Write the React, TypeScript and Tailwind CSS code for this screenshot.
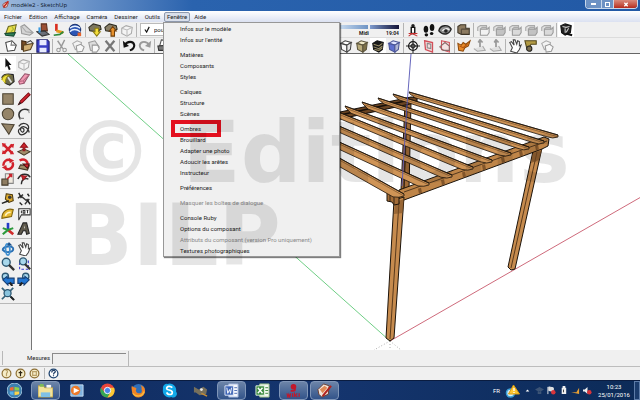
import React from "react";

type Kids = { children?: React.ReactNode };

function Ico({ children }: Kids) {
  return (
    <svg viewBox="0 0 16 16" className="h-[14px] w-[14px] shrink-0" fill="none" stroke="#333" strokeWidth="1.2" aria-hidden="true">
      {children}
    </svg>
  );
}

/* ---------- toolbar drawings ---------- */
const cube = (a: string, b: string, c: string, s: string) => (
  <Ico>
    <path d="M2 5l5-3 7 2-5 3z" fill={a} stroke={s} />
    <path d="M2 5l7 2v8l-6-3z" fill={b} stroke={s} />
    <path d="M9 7l5-3-1 8-4 3z" fill={c} stroke={s} />
  </Ico>
);
const solids = (fill: string) => (
  <Ico>
    <path d="M2 9V5l3-2h7v6l-2 3" fill="#e2e2e2" stroke="#aaa" />
    <path d="M5 7h8l2-2v6l-2 3H5z" fill={fill} stroke="#999" />
    <path d="M5 7l2-2h6" stroke="#aaa" />
  </Ico>
);
const sheet = (
  <Ico>
    <path d="M2 4l7-2 5 5-2 6-8 1z" fill="#fff" stroke="#444" />
    <path d="M9 2l-1 5 6 0" stroke="#777" />
  </Ico>
);
const greyBox = (
  <Ico>
    <path d="M2 6l5-3 7 2-1 7-5 3-6-3z" fill="#f4f4f4" stroke="#aaa" />
    <path d="M2 6l6 2 6-3M8 8v6" stroke="#bbb" />
  </Ico>
);

const I: Record<string, React.ReactNode> = {
  map: (
    <Ico>
      <path d="M2 12l3-8 9-2-2 9z" fill="#e9dc4a" stroke="#6a6a20" />
      <path d="M1 12l12-1-2 4-9-1z" fill="#2f7f55" stroke="#174a34" />
      <path d="M9 4l2 3-3 3" stroke="#a8b83a" strokeWidth="1.500" />
    </Ico>
  ),
  terrain: (
    <Ico>
      <path d="M1 4l4-2 10 9-4 3-9-2z" fill="#d4d4d4" stroke="#999" />
      <path d="M2 4l5 6 7 1" stroke="#aaa" />
    </Ico>
  ),
  building: (
    <Ico>
      <path d="M6 1h6l1 8H6z" fill="#9b4f35" stroke="#5b2e1e" />
      <path d="M1 10l9-1 5 4-8 2z" fill="#6b6f78" stroke="#333" />
      <path d="M4 5v6" stroke="#3d9be0" strokeWidth="2.4" />
    </Ico>
  ),
  axesMan: (
    <Ico>
      <path d="M5 1v8" stroke="#d92d1f" strokeWidth="3" />
      <path d="M5 9l8 2" stroke="#e59a1f" strokeWidth="3.500" />
      <path d="M2 14l7-1 4-3" stroke="#2f8a3b" strokeWidth="2" />
    </Ico>
  ),
  earth: (
    <Ico>
      <circle cx="8" cy="8" r="6.500" fill="#2b55b5" stroke="#1a3270" />
      <path d="M2 6c4-3 8-3 12 0M2 10c4-4 8-3 12 0" stroke="#e8f1ff" strokeWidth="1.600" />
      <path d="M11 11h4v4h-4z" fill="#e4622a" stroke="none" />
    </Ico>
  ),
  getModels: (
    <Ico>
      <path d="M1 5l5-4 8 2 1 4-5 3-8-1z" fill="#7d7760" stroke="#2d2b20" />
      <path d="M8 6h4v4h2l-4 5-4-5h2z" fill="#f5df3a" stroke="#8c7b14" />
    </Ico>
  ),
  shareModel: (
    <Ico>
      <path d="M1 5l5-4 8 2 1 4-5 3-8-1z" fill="#8a8069" stroke="#2d2b20" />
      <path d="M8 15V9H6l4-5 4 5h-2v6z" fill="#e8912c" stroke="#6e3f0d" />
    </Ico>
  ),
  greyBox,
  sheet,
  open: (
    <Ico>
      <path d="M2 2l5 1v10l-5-1z" fill="#7a4f28" stroke="#3a2410" />
      <path d="M4 7l11-2-3 7-8 2z" fill="#cfae74" stroke="#5b4422" />
      <path d="M8 4l4-2 3 3" stroke="#444" />
    </Ico>
  ),
  save: (
    <Ico>
      <path d="M1 1h12l2 2v12H1z" fill="#3a3fc4" stroke="#20226e" />
      <path d="M4 1h8v6H4zM4 10h8v5H4z" fill="#e8ecff" stroke="none" />
    </Ico>
  ),
  cut: (
    <Ico>
      <path d="M3 2l6 9M11 1L6 11" stroke="#999" strokeWidth="1.600" />
      <circle cx="4" cy="12.500" r="2" stroke="#999" />
      <circle cx="11" cy="12.500" r="2" stroke="#999" />
    </Ico>
  ),
  copy: (
    <Ico>
      <path d="M2 5l5-3 5 2-1 6-6 2z" fill="#f3f3f3" stroke="#aaa" />
      <path d="M6 8l5-2 4 3-2 5-6 1z" fill="#f8f8f8" stroke="#999" />
    </Ico>
  ),
  paste: (
    <Ico>
      <path d="M2 4l7-2 5 7-4 5-6-1z" fill="#ddd" stroke="#999" />
      <path d="M6 7h6l2 4-3 4H6z" fill="#fafafa" stroke="#999" />
    </Ico>
  ),
  del: (
    <Ico>
      <path d="M3 2l10 12M13 2L3 14" stroke="#777" strokeWidth="2.600" />
    </Ico>
  ),
  undo: (
    <Ico>
      <path d="M3 7c3-5 10-5 11 0 0 3-2 5-5 6" stroke="#111" strokeWidth="2.400" />
      <path d="M1 2l1 8 6-2z" fill="#111" stroke="none" />
    </Ico>
  ),
  redo: (
    <Ico>
      <path d="M13 7C10 2 3 2 2 7c0 3 2 5 5 6" stroke="#999" strokeWidth="2.200" />
      <path d="M15 2l-1 8-6-2z" fill="#999" stroke="none" />
    </Ico>
  ),
  print: (
    <Ico>
      <path d="M5 1l7 1-1 6H3z" fill="#fff" stroke="#555" />
      <path d="M1 8l13-1v6H2z" fill="#777" stroke="#333" />
    </Ico>
  ),
  figure: (
    <Ico>
      <circle cx="8" cy="3" r="2" fill="#222" stroke="none" />
      <path d="M6 5h4v7H6z" fill="#fff" stroke="#111" strokeWidth="1.600" />
      <path d="M3 15l4-3 6 3M3 12l10 0" stroke="#c53030" />
    </Ico>
  ),
  feet: (
    <Ico>
      <ellipse cx="4.500" cy="7" rx="2.600" ry="4" fill="#111" stroke="none" />
      <ellipse cx="11.500" cy="5" rx="2.600" ry="4" fill="#111" stroke="none" />
      <ellipse cx="5" cy="13.500" rx="2" ry="1.800" fill="#111" stroke="none" />
      <ellipse cx="11" cy="12" rx="2" ry="1.800" fill="#111" stroke="none" />
    </Ico>
  ),
  eye: (
    <Ico>
      <path d="M1 9c1-7 11-8 14-2-2 6-9 8-14 2z" fill="#8d8d8d" stroke="#222" strokeWidth="1.600" />
      <path d="M5 9c2-3 6-3 8-1" stroke="#eee" strokeWidth="1.500" />
      <circle cx="9" cy="9" r="2" fill="#222" stroke="none" />
    </Ico>
  ),
  outer: (
    <Ico>
      <path d="M1 4l3-2h6v4h4v7H5l-4-2z" fill="#8c7a60" stroke="#3c3426" />
      <path d="M5 7h9M5 7v6" stroke="#53483a" />
    </Ico>
  ),
  solidA: solids("#f2f2f2"),
  solidB: solids("#c2c2c2"),
  solidC: solids("#dadada"),
  texBox: (
    <Ico>
      <path d="M2 3l5-2 7 2-1 8-6 3-4-3z" fill="#222" stroke="#111" />
      <path d="M4 4l4 1 4-1M7 6l0 5M11 6l-3 5" stroke="#ccc" strokeWidth="1.200" />
      <path d="M8 12l7 2" stroke="#111" strokeWidth="2.400" />
    </Ico>
  ),
  cubeW: cube("#fff", "#fafafa", "#e6e6e6", "#444"),
  cubeT: cube("#efe9c8", "#b9ac7c", "#7c7048", "#5c553d"),
  cubeK: (
    <Ico>
      <path d="M2 5l5-3 7 2-1 8-4 3-6-3z" fill="#1a1a1a" stroke="#111" />
      <path d="M3 6l6 2 4-3M3 9l6 2 4-3M4 12l5 1 4-3" stroke="#9c9068" />
    </Ico>
  ),
  cubeB: cube("#dfe4ff", "#5f70d0", "#b0b6d4", "#4a5596"),
  section: (
    <Ico>
      <circle cx="8" cy="8" r="5" stroke="#111" strokeWidth="1.500" />
      <path d="M8 0v16M0 8h16M5 8l3-3 3 3-3 3z" stroke="#222" />
    </Ico>
  ),
  plane: (
    <Ico>
      <path d="M3 2l9 2v11l-8-3z" fill="#f3dcdc" stroke="#d2505a" strokeWidth="1.500" />
      <path d="M6 5l4 1v5l-4-1z" stroke="#888" />
    </Ico>
  ),
  planeCut: (
    <Ico>
      <path d="M4 2l9 2v11l-9-3z" fill="#f4e3e3" stroke="#d2505a" />
      <path d="M2 9l6-5 5 4v5H6z" stroke="#8a6a6a" />
    </Ico>
  ),
  sandbox: (
    <Ico>
      <path d="M1 5l4 2 2-3 3 2 5-4-2 6-4 2-2 4-5-1z" fill="#e78a2a" stroke="#8e4a0c" />
      <path d="M3 8l4 2 5-4" stroke="#b3540f" />
    </Ico>
  ),
  stamp: (
    <Ico>
      <path d="M1 11l4 3 9-1-3-5" fill="#e0e0e0" stroke="#aaa" />
      <path d="M8 1v8M6 4l2-3 3 3" stroke="#999" strokeWidth="2" />
    </Ico>
  ),
  hand: (
    <Ico>
      <path d="M3 14l2-4-3-6 2-1 3 4-1-6 2 0 2 5 1-4 2 1 0 5 2-1-2 5-3 4z" fill="#fff" stroke="#444" />
    </Ico>
  ),
  tape2: (
    <Ico>
      <path d="M1 2h13v4H8L6 10H3z" fill="#b29a43" stroke="#54481c" />
      <circle cx="6" cy="11" r="3" fill="#7d7050" stroke="#222" />
    </Ico>
  ),

  /* large tool set */
  select: (
    <Ico>
      <path d="M5 1l7 8-3 0 2 5-2 1-2-5-2 2z" fill="#111" stroke="none" />
    </Ico>
  ),
  eraser: (
    <Ico>
      <path d="M2 11l7-9 5 1-6 10-5 1z" fill="#f39ab4" stroke="#94546a" />
      <path d="M2 11l5-1 7-7M7 10l1 3" stroke="#ba6a84" />
    </Ico>
  ),
  paint: (
    <Ico>
      <path d="M1 6c2-4 8-4 13-3l1 8-5 4-5-2z" fill="#6d6a49" stroke="#222" />
      <path d="M1 9c0-4 5-7 9-5-4 1-5 4-5 9" fill="#efe13c" stroke="#928614" />
      <path d="M8 6l4 6" stroke="#ddd" strokeWidth="2" />
    </Ico>
  ),
  rect: (
    <Ico>
      <path d="M2 2h12v12H2z" fill="#958468" stroke="#4b4232" />
    </Ico>
  ),
  pencil: (
    <Ico>
      <path d="M2 14l2-4 9-9 2 2-9 9z" fill="#d62330" stroke="#7c1018" />
      <path d="M1 15l4-2-2-2z" fill="#222" stroke="none" />
    </Ico>
  ),
  circle: (
    <Ico>
      <circle cx="8" cy="8" r="6.500" fill="#958468" stroke="#4b4232" />
    </Ico>
  ),
  arc: (
    <Ico>
      <path d="M4 14C-1 6 6 0 14 4" stroke="#333" strokeWidth="1.800" />
      <path d="M3 13l5 0M13 3l1 4" stroke="#888" />
    </Ico>
  ),
  poly: (
    <Ico>
      <path d="M1 2l14 1-6 11z" fill="#958468" stroke="#4b4232" />
    </Ico>
  ),
  free: (
    <Ico>
      <path d="M2 5c4-6 13-3 11 3s-9 9-11 4 6-7 6-3-4 3-4-1 8-4 10 4" stroke="#333" strokeWidth="1.400" />
    </Ico>
  ),
  move: (
    <Ico>
      <path d="M3 3l10 10M13 3L3 13" stroke="#d2232c" strokeWidth="3" />
      <path d="M1 1l5 1-4 4zM15 2l-1 5-4-4zM15 14l-5 0 3-4zM1 14l1-5 4 4z" fill="#d2232c" stroke="none" />
    </Ico>
  ),
  push: (
    <Ico>
      <path d="M1 11l7-3 7 3-7 4z" fill="#a18d6a" stroke="#453a28" />
      <path d="M7 10V6H4l4-5 4 5H9v4z" fill="#d2232c" stroke="#8d1219" />
    </Ico>
  ),
  rotate: (
    <Ico>
      <path d="M3 10a5.500 5.500 0 0 1 8-6M13 6a5.500 5.500 0 0 1-8 7" stroke="#d2232c" strokeWidth="2.800" />
      <path d="M9 1l6 3-5 3zM7 15l-6-3 5-3z" fill="#d2232c" stroke="none" />
    </Ico>
  ),
  follow: (
    <Ico>
      <path d="M2 13l2-4 10 1-2 5z" fill="#9f8b68" stroke="#453a28" />
      <path d="M3 4c5-3 10 0 9 6" stroke="#d2232c" strokeWidth="2.800" />
      <path d="M7 8l7 0-2 5z" fill="#d2232c" stroke="#4c1010" />
    </Ico>
  ),
  scale: (
    <Ico>
      <path d="M5 2h9v11H5z" fill="#efe9df" stroke="#888" />
      <path d="M1 8h7v7H1z" fill="#8f7d62" stroke="#453a28" />
      <path d="M7 8l5-5M9 3h3v3" stroke="#c9232c" strokeWidth="1.800" />
    </Ico>
  ),
  offset: (
    <Ico>
      <path d="M1 8c4-8 12-6 14-2" stroke="#2b2b2b" strokeWidth="1.800" />
      <path d="M5 14c0-6 4-7 8-6" stroke="#2b2b2b" strokeWidth="1.500" />
      <path d="M5 4l6 1-4 4z" fill="#d2232c" stroke="#9a1a20" />
    </Ico>
  ),
  tape: (
    <Ico>
      <path d="M6 2l7 1 1 7-5 2-4-4z" fill="#d9a72d" stroke="#4d3a0c" />
      <circle cx="10" cy="6" r="2" fill="#3a3a3a" stroke="none" />
      <path d="M1 13l8-3" stroke="#222" strokeWidth="1.800" />
    </Ico>
  ),
  dims: (
    <Ico>
      <path d="M5 5l6 5M1 7l6-4M9 14l5-6" stroke="#333" strokeWidth="1.500" />
      <path d="M2 1l3 6M11 8l4 6M3 12l3 3M12 2l2 3" stroke="#222" strokeWidth="1.600" />
    </Ico>
  ),
  protractor: (
    <Ico>
      <path d="M1 13C1 5 7 1 14 3l-2 8z" fill="#e6b932" stroke="#7f620e" />
      <path d="M5 10c1-3 3-4 6-4" stroke="#fff6c8" strokeWidth="1.800" />
    </Ico>
  ),
  label: (
    <Ico>
      <path d="M2 2h13v7H5l-3 6z" fill="#fff" stroke="#333" />
      <path d="M5 4v3M7 4v3h2V4zM11 4h2M12 4v3" stroke="#333" />
    </Ico>
  ),
  axes: (
    <Ico>
      <path d="M8 9V1" stroke="#253ac8" strokeWidth="3" />
      <path d="M8 9l6 5" stroke="#cf2b2b" strokeWidth="3" />
      <path d="M8 9l-6 5M2 7l6 2 6-2" stroke="#2d9a3c" strokeWidth="2.400" />
    </Ico>
  ),
  text3d: (
    <Ico>
      <path d="M1 14L7 1h4l3 12-3 1-1-4H7l-2 4z" fill="#5f5a4c" stroke="#222" />
      <path d="M8 7l1-3 0 3z" fill="#eee" stroke="none" />
    </Ico>
  ),
  orbit: (
    <Ico>
      <path d="M2 9c0-4 12-6 12-1 0 4-9 5-12 1z" stroke="#2a6fb3" strokeWidth="2.200" />
      <path d="M7 2c4 0 4 12 1 13-3 0-4-12-1-13z" stroke="#3f8fd0" strokeWidth="2" />
      <path d="M9 0l4 4-6 0z" fill="#1d5088" stroke="none" />
    </Ico>
  ),
  zoomIn: (
    <Ico>
      <circle cx="6" cy="6" r="4.500" fill="#a9d8ec" stroke="#2d5873" strokeWidth="1.600" />
      <path d="M9 9l6 6" stroke="#333" strokeWidth="2.600" />
    </Ico>
  ),
  zoomWin: (
    <Ico>
      <path d="M3 6v8h10V3" stroke="#3a3ad0" strokeDasharray="3 2" />
      <circle cx="7" cy="5" r="4" fill="#a9d8ec" stroke="#2d5873" strokeWidth="1.600" />
      <path d="M9 8l6 6" stroke="#333" strokeWidth="2.600" />
    </Ico>
  ),
  prev: (
    <Ico>
      <circle cx="5" cy="5" r="3.600" fill="#a9d8ec" stroke="#2d5873" strokeWidth="1.500" />
      <path d="M2 9l5-4v2h8v6H8v2z" fill="#2377d2" stroke="#123c74" />
      <path d="M10 12l3 4" stroke="#222" strokeWidth="2.400" />
    </Ico>
  ),
  next: (
    <Ico>
      <circle cx="10" cy="5" r="3.600" fill="#a9d8ec" stroke="#2d5873" strokeWidth="1.500" />
      <path d="M14 9L9 5v2H1v6h7v2z" fill="#2377d2" stroke="#123c74" />
      <path d="M3 16l3-4" stroke="#222" strokeWidth="2.400" />
    </Ico>
  ),
  extents: (
    <Ico>
      <path d="M1 1l13 13M14 1L1 14" stroke="#37647c" strokeWidth="2" />
      <circle cx="7.500" cy="7" r="4" fill="#8ac4de" stroke="#2d5873" strokeWidth="1.500" />
      <path d="M11 11l4 4" stroke="#222" strokeWidth="2.400" />
    </Ico>
  ),
};

function Tool({ name, on }: { name: string; on?: boolean }) {
  return (
    <button
      type="button"
      aria-label={name}
      className={"flex h-[15px] w-4 shrink-0 items-center justify-center " + (on ? "bg-white" : "")}
    >
      {I[name]}
    </button>
  );
}

function Sep() {
  return <span className="mx-px h-[14px] w-px shrink-0 bg-[#b4b4b4]" />;
}

function Group({ names, on }: { names: string[]; on?: string }) {
  return (
    <div className="flex shrink-0">
      {names.map((n, i) => (
        <Tool key={i} name={n} on={n === on} />
      ))}
    </div>
  );
}

/* ---------- menu ---------- */
const menus = ["Fichier", "Édition", "Affichage", "Caméra", "Dessiner", "Outils"];
const menuGroups = [
  ["Infos sur le modèle", "Infos sur l'entité"],
  ["Matières", "Composants", "Styles"],
  ["Calques", "Structure", "Scènes"],
  ["Ombres", "Brouillard", "Adapter une photo", "Adoucir les arêtes", "Instructeur"],
  ["Préférences"],
  ["Masquer les boîtes de dialogue"],
  ["Console Ruby", "Options du composant", "Attributs du composant (version Pro uniquement)", "Textures photographiques"],
];
const disabled = ["Masquer les boîtes de dialogue", "Attributs du composant (version Pro uniquement)"];

function WindowMenu() {
  return (
    <div className="absolute -left-px top-[10px] z-20 flex w-[177px] flex-col gap-1 border border-[#979797] bg-[#f0f0f0] shadow-[1px_1px_1px_rgba(0,0,0,0.5)]">
      {menuGroups.map((g, i) => (
        <div key={i} className="flex flex-col">
          {g.map((t) => (
            <button
              key={t}
              type="button"
              disabled={disabled.includes(t)}
              className="relative h-[11px] whitespace-nowrap pl-4 text-left leading-[11px] text-[#1c1c1c] disabled:text-[#8b8b8b]"
            >
              {t}
              {t === "Ombres" && <span className="absolute -top-[3px] left-[7px] z-10 h-[17px] w-[50px] border-4 border-[#e3101f]" />}
            </button>
          ))}
        </div>
      ))}
    </div>
  );
}

/* ---------- pergola ---------- */
/* start x, start y, tip x, tip y, thickness; ordered from the far rafter to the near one */
const rafters = [
  [408, 92, 557, 138, 5],
  [392, 94, 543, 144, 5],
  [377, 98, 528, 150, 5],
  [361, 102, 510, 156, 6],
  [344, 106, 491, 163, 6],
  [325, 107, 472, 170, 7],
  [308, 113, 451, 178, 7],
  [290, 120, 428, 186, 8],
  [270, 120, 403, 197, 9],
];

function Rafter({ r }: { r: number[] }) {
  const [x1, y1, x2, yt, t] = r;
  const y2 = yt - 3;
  const m = (y2 - y1) / (x2 - x1);
  return (
    <g>
      <path
        d={`M${x1} ${y1}L${x2} ${y2}L${x2} ${y2 + 2}Q${x2 - 5} ${y2 + 4} ${x2 - 11} ${y2 - 11 * m + t}L${x1 + 6} ${y1 + 6 * m + t - 1}L${x1 + 1} ${y1 + 2}Z`}
        fill="#cf9456"
        stroke="#1d140b"
        strokeWidth="0.8"
      />
      <path d={`M${x1 + 3} ${y1 + 3 * m + 2}L${x2 - 1} ${y2 + 1.5}`} stroke="#5a3a1c" strokeWidth="0.5" />
      <path d={`M${x1} ${y1}L${x2} ${y2}`} stroke="#1d140b" strokeWidth="0.8" />
    </g>
  );
}

function Scene() {
  return (
    <svg viewBox="31 54 609 296" preserveAspectRatio="xMinYMin slice" className="h-full w-full" fill="none" aria-label="Pergola">
      <path d="M67 54L389 341" stroke="#5fc877" strokeWidth="0.9" />
      <path d="M389 341L640 197" stroke="#c8596c" strokeWidth="0.9" />
      <path d="M389 341L373 350M389 341V350M389 341L400 350" stroke="#999" strokeWidth="0.8" strokeDasharray="1 2" />
      {/* back post and back beam */}
      <path d="M404 103L410 102L408 189L400 190Z" fill="#a06a36" stroke="#1d140b" />
      <path d="M406 104L403 189" stroke="#3a2715" strokeWidth="1.5" />
      <path d="M325 115L410 97L416 98V102L409 104L325 122Z" fill="#6a4422" stroke="#17100a" strokeWidth="1.2" />
      <path d="M325 118L409 100" stroke="#17100a" strokeWidth="1.5" />
      {/* right post */}
      <path d="M532 151L541 148L514 269L510 270L507 267Z" fill="#c68b4e" stroke="#1d140b" />
      <path d="M536 152L510 268" stroke="#5a3a1c" />
      <path d="M532 153L541 150L538 160L530 163Z" fill="#7c5026" opacity="0.7" />
      {/* front beam */}
      <path d="M398 190L543 137L548 139L547 146L541 149L403 200L398 203Z" fill="#bf8548" stroke="#1d140b" />
      <path d="M403 192L546 141" stroke="#3a2715" strokeWidth="0.8" />
      {[417, 440, 461, 481, 500, 518, 534].map((x) => (
        <path key={x} d={`M${x} ${194 - (x - 403) * 0.37}l3 -1 1 5 -3 1z`} fill="#6d4520" opacity="0.75" />
      ))}
      {/* near post */}
      <path d="M393 200L403 197L393 338L389 341L385 338Z" fill="#c68b4e" stroke="#1d140b" />
      <path d="M398 202L389 339" stroke="#5a3a1c" />
      <path d="M394 202L403 199L402 213L393 214Z" fill="#7c5026" opacity="0.6" />
      <path d="M386 192L392 194L398 197V204L393 205L391 202L386 201Z" fill="#a36c37" stroke="#1d140b" />
      <path d="M389 194V202M393 196V204" stroke="#1d140b" strokeWidth="0.8" />
      {rafters.map((r, i) => (
        <Rafter key={i} r={r} />
      ))}
      <path d="M410 54L406 105L401 186" stroke="#5656b4" strokeWidth="0.9" />
    </svg>
  );
}

/* ---------- taskbar ---------- */
function TaskIcon({ children, on, label }: Kids & { on?: boolean; label: string }) {
  return (
    <button
      type="button"
      aria-label={label}
      className={
        "flex h-[19px] w-[29px] shrink-0 items-center justify-center rounded-sm border " +
        (on ? "border-[#8096b8] bg-linear-to-b from-[#6c84a8] to-[#33548a]" : "border-transparent")
      }
    >
      <svg viewBox="0 0 16 16" className="h-[15px] w-[15px]" fill="none" aria-hidden="true">
        {children}
      </svg>
    </button>
  );
}

function Tray({ children }: Kids) {
  return (
    <svg viewBox="0 0 10 10" className="h-[9px] w-[9px] shrink-0" fill="none" aria-hidden="true">
      {children}
    </svg>
  );
}

export default function App() {
  return (
    <div className="relative flex h-screen w-full flex-col overflow-hidden bg-[#f0f0f0] font-[Roboto,'Noto_Sans',sans-serif] text-[6px] leading-[10px] text-[#1c1c1c]">
      {/* title bar */}
      <header className="flex h-[11px] shrink-0 items-start bg-linear-to-r from-[#9db9dc] via-[#2a63ae] via-30% to-[#2259a5] pl-[2px]">
        <svg viewBox="0 0 10 10" className="mr-px h-[9px] w-[8px]" aria-hidden="true">
          <path d="M1 5l4-3 3 1-2 5-4 1z" fill="#f4e8e0" stroke="#943025" />
          <path d="M2 8l6-7" stroke="#c3271b" strokeWidth="2" />
        </svg>
        <h1 className="flex-1 font-['Open_Sans',sans-serif] text-[6px] leading-[11px] text-[#0c1526]">modèle2 - SketchUp</h1>
        <div className="mr-[2px] flex h-[9px] overflow-hidden rounded-b-sm border border-t-0 border-[#c8d7ea]">
          <button type="button" aria-label="Réduire" className="flex w-[15px] items-center justify-center bg-[#6d92c4]">
            <span className="h-[2px] w-[5px] bg-white" />
          </button>
          <button type="button" aria-label="Restaurer" className="flex w-[13px] items-center justify-center border-x border-[#c8d7ea] bg-[#6d92c4]">
            <span className="h-[5px] w-[5px] border border-white" />
          </button>
          <button type="button" aria-label="Fermer" className="flex w-[23px] items-center justify-center bg-linear-to-b from-[#d98a7c] to-[#b5281a]">
            <svg viewBox="0 0 6 6" className="h-[5px] w-[6px]" stroke="#fff" strokeWidth="1.6" aria-hidden="true">
              <path d="M1 1l4 4M5 1L1 5" />
            </svg>
          </button>
        </div>
      </header>

      {/* menu bar */}
      <nav className="flex h-[11px] shrink-0 items-center gap-px bg-linear-to-b from-white to-[#dbe1f1] pl-px">
        {menus.map((m) => (
          <button key={m} type="button" className="h-[10px] px-[3px] leading-[10px]">
            {m}
          </button>
        ))}
        <div className="relative">
          <button type="button" className="h-[10px] rounded-[2px] border border-[#8e99ad] bg-[#d9dfeb] px-[2px] leading-[8px]">
            Fenêtre
          </button>
          <WindowMenu />
        </div>
        <button type="button" className="h-[10px] px-[3px] leading-[10px]">
          Aide
        </button>
      </nav>

      {/* toolbars */}
      <div className="flex h-4 shrink-0 items-center border-b border-[#dcdcdc] pl-[3px]">
        <Group names={["map", "terrain", "building", "axesMan", "earth"]} />
        <span className="w-px" />
        <Sep />
        <Group names={["getModels", "shareModel", "greyBox"]} />
        <Sep />
        <div className="ml-[2px] flex h-[13px] w-[199px] shrink-0 items-center border border-[#bbb] bg-white pl-[3px]">
          <svg viewBox="0 0 8 8" className="h-[7px] w-[7px] shrink-0" fill="none" aria-hidden="true">
            <path d="M1 4l2 3 3-6" stroke="#111" strokeWidth="1.3" />
          </svg>
          <select aria-label="Calque" className="ml-[3px] flex-1 appearance-none">
            <option>pour pergola</option>
          </select>
        </div>
        <div className="flex w-[63px] shrink-0 flex-col gap-px pt-[2px] pr-[3px] text-[5px] leading-[6px] font-bold">
          <div className="flex gap-[2px]">
            <span className="h-[4px] flex-1 bg-linear-to-r from-[#c9dcf0] to-[#6f94c4]" />
            <span className="h-[4px] flex-1 bg-linear-to-r from-[#7f9cd0] to-[#141438]" />
          </div>
          <div className="flex justify-between pl-[20px]">
            <span>Midi</span>
            <span>19:04</span>
          </div>
        </div>
        <Sep />
        <Group names={["figure", "feet", "eye"]} />
        <Sep />
        <Group names={["outer"]} />
        <Sep />
        <Group names={["solidA", "solidB", "solidC", "solidB", "solidC"]} />
        <Sep />
        <Tool name="texBox" on />
      </div>
      <div className="flex h-[15px] shrink-0 items-center pl-[3px]">
        <Group names={["sheet", "open", "save"]} />
        <Sep />
        <Group names={["cut", "copy", "paste", "del"]} />
        <Sep />
        <Group names={["undo", "redo"]} />
        <Sep />
        <Tool name="print" />
        <span className="w-[166px] shrink-0" />
        <Group names={["cubeW", "cubeT", "cubeK", "cubeB"]} on="cubeK" />
        <Sep />
        <Group names={["section", "plane", "planeCut"]} />
        <Sep />
        <Group names={["sandbox", "stamp", "stamp"]} />
        <Sep />
        <Group names={["hand", "tape2", "copy"]} />
      </div>

      {/* tool column and drawing area */}
      <div className="flex min-h-0 flex-1 border-t border-[#666]">
        <aside className="flex w-8 shrink-0 flex-col gap-[2px] border-r border-[#777] pt-[2px]">
          {[
            ["select", "greyBox", "paint", "eraser"],
            ["rect", "pencil", "circle", "arc", "poly", "free"],
            ["move", "push", "rotate", "follow", "scale", "offset"],
            ["tape", "dims", "protractor", "label", "axes", "text3d"],
            ["orbit", "hand", "zoomIn", "zoomWin", "prev", "next", "extents"],
          ].map((g, i) => (
            <div key={i} className="grid grid-cols-[16px_15px] border-b border-[#b8b8b8] pb-[2px]">
              {g.map((n) => (
                <Tool key={n} name={n} on={n === "select"} />
              ))}
            </div>
          ))}
        </aside>
        <main className="min-w-0 flex-1 bg-white">
          <Scene />
        </main>
      </div>

      {/* measurements */}
      <div className="flex h-[17px] shrink-0 items-center border-b border-[#bdbdbd] pl-[2px]">
        <span className="h-[14px] w-px bg-[#b8b8b8]" />
        <label htmlFor="mesures" className="pl-6 pr-[2px]">
          Mesures
        </label>
        <input id="mesures" className="h-[11px] w-[74px] border-l border-t border-[#8a8a8a] bg-[#efefef] px-1" />
        <span className="ml-[2px] h-[15px] w-px bg-[#b8b8b8]" />
      </div>
      <div className="flex h-[13px] shrink-0 items-center gap-[3px] pl-px">
        {["M5 3c2-1 3 1 1 3v3", "M6 3v6M4 5h4", "M4 4h4v4H4z"].map((d) => (
          <svg key={d} viewBox="0 0 12 12" className="h-[11px] w-[11px]" fill="none" aria-hidden="true">
            <circle cx="6" cy="6" r="4.800" fill="#f6edc9" stroke="#8d6f33" strokeWidth="1.300" />
            <path d={d} stroke={d === "M6 3v6M4 5h4" ? "#2b2212" : "#b9a068"} strokeWidth="1.300" />
          </svg>
        ))}
        <span className="ml-px h-[11px] w-px bg-[#b8b8b8]" />
        <svg viewBox="0 0 12 12" className="h-[11px] w-[11px]" fill="none" aria-hidden="true">
          <circle cx="6" cy="6" r="4.800" fill="#fff" stroke="#1f4470" strokeWidth="1.400" />
          <path d="M4 5c0-3 4-3 4-1 0 1-2 1-2 3M6 8v1" stroke="#1f3c64" strokeWidth="1.300" />
        </svg>
      </div>

      {/* taskbar */}
      <footer className="flex h-5 shrink-0 items-center gap-[2px] border-t border-[#0a1c40] bg-linear-to-r from-[#102c5e] via-[#15356f] to-[#0c2b58]">
        <TaskIcon label="Démarrer">
          <circle cx="8" cy="8" r="8" fill="#3d7fb0" stroke="#a9cbe0" />
          <path d="M3 5l4-1v4H3z" fill="#ee6a35" />
          <path d="M8 4l5 1v3H8z" fill="#8fcf4a" />
          <path d="M3 9h4v4l-4-1z" fill="#57b2ec" />
          <path d="M8 9h5v3l-5 1z" fill="#fbd34b" />
        </TaskIcon>
        <TaskIcon label="Explorateur" on>
          <path d="M0 3h6l1 2h9v10H0z" fill="#f3e39a" stroke="#b49a43" />
          <path d="M2 1h4v3H2z" fill="#7cba58" />
          <path d="M9 2h5v3H9z" fill="#f5f5f5" />
          <path d="M3 10h10v5H3z" fill="#7fc1e6" />
        </TaskIcon>
        <TaskIcon label="Lecteur multimédia">
          <path d="M2 2h13v12H2z" fill="#7fb2df" stroke="#c9e0f4" />
          <circle cx="7" cy="8" r="5" fill="#ed7a2a" />
          <path d="M5 5l6 3-6 3z" fill="#fff" />
        </TaskIcon>
        <TaskIcon label="Chrome">
          <circle cx="8" cy="8" r="7.500" fill="#e9453a" />
          <path d="M1 5a7.500 7.500 0 0 0 7 10.500L11 10H5z" fill="#35a854" />
          <path d="M8 15.500A7.500 7.500 0 0 0 15 5H9l2 5z" fill="#fbc934" />
          <circle cx="8" cy="8" r="3.400" fill="#4a86ea" stroke="#fff" />
        </TaskIcon>
        <TaskIcon label="Firefox">
          <circle cx="8" cy="8" r="7" fill="#2f6fb8" />
          <path d="M1 3c1 2 3 1 5 3-2 2 0 5 3 5 3 0 3-3 2-5 1 0 0-3-1-4 3 1 5 3 5 6a7 7 0 0 1-14 1c0-2-1-4 0-6z" fill="#f08325" />
          <path d="M2 11c3 4 10 4 12-2" stroke="#f9ba3a" strokeWidth="1.500" />
        </TaskIcon>
        <TaskIcon label="Skype">
          <path d="M1 5a4 4 0 0 1 5-4 7 7 0 0 1 9 8 4 4 0 0 1-5 6 7 7 0 0 1-9-8z" fill="#12a9ea" />
          <path d="M11 5C9 3 5 3 5 6c0 2 6 1 6 4 0 3-5 3-6 0" stroke="#fff" strokeWidth="1.800" />
        </TaskIcon>
        <TaskIcon label="GIMP">
          <path d="M1 4l5 3 5-3 4 3-1 5-7 1-4-3-2 0z" fill="#77705c" />
          <circle cx="9" cy="7" r="1.500" fill="#eee" />
          <path d="M9 11l6 3" stroke="#c78d36" strokeWidth="1.500" />
        </TaskIcon>
        <TaskIcon label="Word" on>
          <path d="M5 1h10v14H5z" fill="#f4f7fd" stroke="#9cb0d8" />
          <path d="M1 3h9v10H1z" fill="#3a62b4" stroke="#e1e9f8" />
          <path d="M3 5l1 6 2-4 1 4 1-6" stroke="#fff" />
          <path d="M11 5h3M11 8h3M11 11h3" stroke="#4a6bb0" />
        </TaskIcon>
        <TaskIcon label="Excel">
          <path d="M5 1h10v14H5z" fill="#f2f8ef" stroke="#98bd87" />
          <path d="M1 3h9v10H1z" fill="#3b8a3e" stroke="#e1f3e0" />
          <path d="M3 5l5 6M8 5l-5 6" stroke="#fff" strokeWidth="1.500" />
          <path d="M11 5h3M11 8h3M11 11h3" stroke="#3b8a3e" />
        </TaskIcon>
        <TaskIcon label="wiki" on>
          <circle cx="8" cy="4" r="3" fill="#c2182b" />
          <path d="M9 6c2 2-2 3-4 2" stroke="#c2182b" strokeWidth="2" />
          <path d="M1 11l1 4 1-3 1 3 1-4M7 11v4M9 10v5M12 11l-2 2 2 2M14 11v4" stroke="#c2182b" strokeWidth="1.200" />
        </TaskIcon>
        <TaskIcon label="SketchUp" on>
          <path d="M1 7l6-6 6 2-1 9-7 3-3-3z" fill="#f3e5da" stroke="#6b3b2b" />
          <path d="M3 7l5-4 3 2-5 6z" fill="#e08a55" />
          <path d="M6 14l9-11" stroke="#b3231f" strokeWidth="2.200" />
        </TaskIcon>

        <div className="ml-auto flex h-full shrink-0 items-center gap-[3px] text-white">
          <span className="mr-[2px]">FR</span>
          <svg viewBox="0 0 14 14" className="h-[14px] w-[15px]" fill="none" aria-hidden="true">
            <circle cx="5" cy="9" r="4" fill="#d5ecf8" stroke="#3aa0d8" strokeWidth="1.600" />
            <path d="M8 1l6 9H3z" fill="#fbc531" stroke="#d89b12" />
            <path d="M8.500 4v3M8.500 8v1" stroke="#fff" strokeWidth="1.300" />
          </svg>
          <Tray>
            <path d="M3 6l2-2 2 2z" fill="#fff" />
          </Tray>
          <Tray>
            <path d="M0 4l5-3 5 3-5 3zM3 6v3h4V6" fill="#3c5476" />
          </Tray>
          <Tray>
            <path d="M1 1v8M2 1l5 1v4l-5-1z" stroke="#eee" fill="#ddd" />
            <circle cx="7" cy="7" r="2.500" fill="#d7343a" />
          </Tray>
          <Tray>
            <path d="M3 2h5v7H3zM4 0h3v2H4z" fill="#f0f0f0" />
            <path d="M5 4v3" stroke="#333" />
          </Tray>
          <Tray>
            <path d="M0 7h6l3-5v7z" fill="#e8a032" />
          </Tray>
          <Tray>
            <path d="M0 4h2l3-3v8L2 6H0z" fill="#eee" />
            <circle cx="7" cy="7" r="2.500" fill="#d7343a" />
          </Tray>
          <time className="ml-[2px] flex w-[34px] flex-col items-center leading-[8px]">
            <span>10:23</span>
            <span>25/01/2016</span>
          </time>
          <button type="button" aria-label="Afficher le bureau" className="h-full w-[6px] border border-[#5d7ca8] bg-[#1b3c6c]" />
        </div>
      </footer>

      {/* watermark laid over the whole window */}
      <p className="pointer-events-none absolute left-[68px] top-[111px] z-30 whitespace-pre font-['DejaVu_Sans',sans-serif] text-[85px] font-bold leading-[83px] text-black/10">
        {"© Editions\nBILP"}
      </p>
    </div>
  );
}
